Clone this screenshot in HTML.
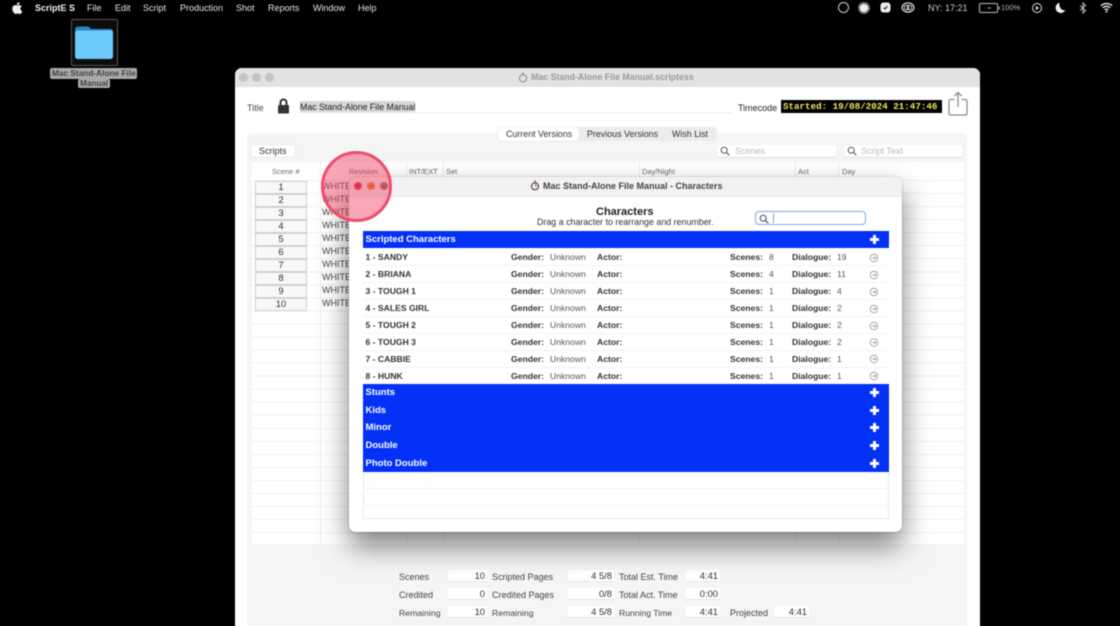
<!DOCTYPE html>
<html><head><meta charset="utf-8"><style>
html,body{margin:0;padding:0;background:#000;width:1120px;height:626px;overflow:hidden}
body{font-family:"Liberation Sans",sans-serif;font-size:9px;color:#333;position:relative;filter:blur(.4px)}
div,span,svg{position:absolute;white-space:nowrap}
.m{color:#e6e6e6;font-size:9px;top:2px;line-height:12px}
.h{color:#666;font-size:7.5px;top:167px;line-height:9px}
.b{left:255px;width:50px;height:10.5px;border:1px solid #cfcfcf;background:#f8f8f8;text-align:center;font-size:9.5px;line-height:11.5px;color:#333}
.w{left:322px;font-size:9px;line-height:11px;color:#444}
.n,.l,.v,.c{font-size:8.6px;line-height:12px}
.n,.l{font-weight:bold;color:#333}.v{color:#555}
.g{left:511px}.u{left:550px}.a{left:597px}.s{left:730px}.t{left:769px}.d{left:792px}.e{left:837px}
.blue{left:362.5px;width:526.5px;background:#0331f6}
.bt{left:365.5px;color:#fff;font-weight:bold;font-size:9.5px;line-height:12px}
.p1{width:9px;height:2.6px;background:#fff;left:870px}.p2{width:2.6px;height:9px;background:#fff;left:873.2px}
.f{color:#444;font-size:9px;line-height:12px}
.x{background:#fff;height:11px;border-bottom:1px solid #e4e4e4;text-align:right;font-size:9.4px;line-height:12px;color:#333;box-sizing:content-box;padding-right:2px}
.sep{left:362.5px;width:526.5px;height:1px;background:#f3f3f3}
.cl{top:162px;width:1px;height:382px;background:#ececec}
</style></head><body>
<svg style="left:12px;top:2px" width="11" height="12" viewBox="0 0 22 24"><path fill="#eee" d="M15 0c.2 2-.6 3.500-1.500 4.700-1 1.200-2.500 2-4 1.900C9.300 4.700 10.100 3 11 2c1-1.100 2.700-1.900 4-2zM19.800 8.300c-2 1.200-3 2.900-3 5 0 2.400 1.400 4.300 3.900 5.300-.6 1.700-1.300 3-2.300 4.100-1 1.200-2 1.300-3 1.300-1.500 0-2.200-.9-4-.9s-2.600.9-4 .9c-1.200 0-2.300-.7-3.400-2.200C1.400 19 .5 16 .5 13.500c0-4.400 2.800-7.200 6-7.200 1.600 0 3 1 4 1 1 0 2.600-1.100 4.400-1.100 2 0 3.700 .7 4.900 2.100z"/></svg>
<span class="m" style="left:35px;font-weight:bold;color:#f2f2f2">ScriptE S</span>
<span class="m" style="left:87px">File</span>
<span class="m" style="left:115px">Edit</span>
<span class="m" style="left:143px">Script</span>
<span class="m" style="left:180px">Production</span>
<span class="m" style="left:236px">Shot</span>
<span class="m" style="left:268px">Reports</span>
<span class="m" style="left:313px">Window</span>
<span class="m" style="left:358px">Help</span>

<svg style="left:837px;top:1px" width="13" height="13"><circle cx="6.500" cy="6.500" r="5" fill="none" stroke="#ccc" stroke-width="1"/></svg>
<svg style="left:858px;top:2px" width="12" height="12" viewBox="0 0 12 12"><circle cx="6" cy="6" r="3.800" fill="#eee" stroke="#eee" stroke-width="1"/><circle cx="6" cy="6" r="5.200" fill="none" stroke="#ddd" stroke-width="1.500" stroke-dasharray="1.300 1"/></svg>
<svg style="left:880px;top:2px" width="11" height="11" viewBox="0 0 11 11"><rect x=".5" y=".5" width="10" height="10" rx="3" fill="#eee"/><path d="M3.500 5.500l1.500 1.500 2.500-3" fill="none" stroke="#222" stroke-width="1"/></svg>
<svg style="left:901px;top:2px" width="14" height="11" viewBox="0 0 14 11"><ellipse cx="7" cy="5.500" rx="6" ry="4.600" fill="none" stroke="#ddd" stroke-width="1.200"/><circle cx="5.500" cy="5.500" r="2.300" fill="none" stroke="#ddd" stroke-width="1"/><circle cx="8.500" cy="5.500" r="2.300" fill="none" stroke="#ddd" stroke-width="1"/></svg>
<span class="m" style="left:928px;color:#ccc">NY: 17:21</span>
<svg style="left:979px;top:3px" width="22" height="10"><rect x=".5" y=".5" width="18" height="9" rx="1.500" fill="none" stroke="#bbb"/><rect x="9" y="4.500" width="2.500" height="1" fill="#ccc"/><rect x="19.500" y="3.500" width="1.200" height="3" fill="#aaa"/></svg>
<span style="left:1001px;top:3px;font-size:7.5px;line-height:10px;color:#bbb">100%</span>
<svg style="left:1031px;top:2px" width="12" height="12"><circle cx="6" cy="6" r="4.500" fill="none" stroke="#ddd"/><path d="M4.800 3.800L8 6l-3.200 2.200z" fill="#ddd"/></svg>
<svg style="left:1055px;top:2px" width="11" height="12" viewBox="0 0 11 12"><path d="M4.500 .8C2 1.500.6 3.500.6 5.800c0 3 2.400 5.200 5.200 5.200 2 0 3.700-1 4.500-2.700-3.500.6-6.600-2.800-5.800-7.500z" fill="#eee"/></svg>
<svg style="left:1079px;top:2px" width="8" height="12" viewBox="0 0 8 12"><path d="M1 3.500l5.500 5L4 11V1l2.500 2.500L1 8.500" fill="none" stroke="#bbb" stroke-width="1"/></svg>
<svg style="left:1100px;top:2px" width="13" height="11" viewBox="0 0 13 11"><path d="M.8 3.800C4 .8 9 .8 12.200 3.800M2.700 5.800c2.200-2 5.400-2 7.600 0M4.600 7.800c1.100-1 2.700-1 3.800 0" fill="none" stroke="#eee" stroke-width="1.300"/><circle cx="6.500" cy="9.500" r="1" fill="#eee"/></svg>

<div style="left:70.500px;top:19px;width:45px;height:45px;border:1px solid #555;border-radius:2px;background:#0c0c0c"></div>
<svg style="left:75px;top:26px" width="38" height="33" viewBox="0 0 38 33"><path d="M0 4Q0 .5 3 .5h9q2 0 3 1.500l1 1h19q3 0 3 3V10H0z" fill="#2a86c8"/><rect x="0" y="4.500" width="38" height="28.500" rx="2.500" fill="#6ccbfb"/></svg>
<div style="left:50px;top:68px;width:87px;height:11px;background:#a9a9a9;border-radius:2px"></div>
<div style="left:78px;top:79px;width:32px;height:9px;background:#a9a9a9;border-radius:2px"></div>
<span style="left:52px;top:68px;font-size:8.200px;font-weight:bold;color:#444;line-height:11px;letter-spacing:.05px">Mac Stand-Alone File</span>
<span style="left:80px;top:78px;font-size:8.200px;font-weight:bold;color:#444;line-height:11px">Manual</span>

<!-- main window -->
<div style="left:235px;top:68px;width:745px;height:570px;background:#fff;border-radius:7px 7px 0 0;overflow:hidden">
<div style="left:0;top:0;width:745px;height:19px;background:#e2e2e2"></div>
<div style="left:4px;top:5px;width:8.500px;height:8.500px;border-radius:50%;background:#c4c4c4"></div>
<div style="left:17px;top:5px;width:8.500px;height:8.500px;border-radius:50%;background:#c4c4c4"></div>
<div style="left:30px;top:5px;width:8.500px;height:8.500px;border-radius:50%;background:#c4c4c4"></div>
</div>
<svg style="left:518px;top:72px" width="10" height="11" viewBox="0 0 10 11"><circle cx="5" cy="6.300" r="3.600" fill="none" stroke="#8a8a8a" stroke-width="1"/><path d="M4 1.200h2M5 1v2" stroke="#8a8a8a" stroke-width="1"/></svg>
<span style="left:531px;top:71px;font-size:8.800px;font-weight:bold;color:#9a9a9a;line-height:12px">Mac Stand-Alone File Manual.scriptess</span>

<span class="f" style="left:247px;top:102px">Title</span>
<svg style="left:277px;top:98px" width="13" height="16" viewBox="0 0 13 16"><path d="M3.500 7.500V4.500a3 3 0 016 0v3" fill="none" stroke="#333" stroke-width="2"/><rect x="1" y="7" width="11" height="8.500" rx="1" fill="#333"/></svg>
<div style="left:298px;top:101px;width:434px;height:11px;background:#fff;border-bottom:1px solid #ececec"></div>
<div style="left:300px;top:101px;width:115px;height:11px;background:#d8d8d8"></div>
<span class="f" style="left:300px;top:101px;color:#222;font-size:8.800px">Mac Stand-Alone File Manual</span>
<span class="f" style="left:738px;top:102px;color:#222">Timecode</span>
<div style="left:781px;top:100px;width:161px;height:13px;background:#000"></div>
<span style="left:783px;top:101px;font-family:'Liberation Mono',monospace;font-weight:bold;font-size:9.200px;line-height:12px;color:#f4e85a">Started: 19/08/2024 21:47:46</span>
<svg style="left:948px;top:91px" width="21" height="25" viewBox="0 0 21 25"><path d="M6.500 8.500H2.500a1.500 1.500 0 00-1.500 1.500v12.500a1.500 1.500 0 001.500 1.500h15a1.500 1.500 0 001.500-1.500V10a1.500 1.500 0 00-1.500-1.500h-4M10 16V1.500M6.500 5L10 1.500 13.500 5" fill="none" stroke="#8a8a8a" stroke-width="1.300"/></svg>

<div style="left:247px;top:133px;width:720px;height:493px;background:#f5f5f5;border-radius:5px 5px 0 0"></div>
<div style="left:498px;top:127px;width:219px;height:14px;background:#ececec;border-radius:4px"></div>
<div style="left:498px;top:127px;width:81px;height:14px;background:#fff;border-radius:4px;box-shadow:0 0 1px #aaa"></div>
<span class="f" style="left:506px;top:128px;color:#333;font-size:8.900px">Current Versions</span>
<span class="f" style="left:587px;top:128px;color:#333;font-size:8.900px">Previous Versions</span>
<span class="f" style="left:672px;top:128px;color:#333;font-size:8.900px">Wish List</span>

<div style="left:251px;top:145px;width:44px;height:12px;background:#fff;border-radius:3px;box-shadow:0 0 1px #aaa"></div>
<span class="f" style="left:259px;top:145px;color:#333">Scripts</span>
<div style="left:717px;top:145px;width:120px;height:12px;background:#fff;border-radius:3px;box-shadow:0 .5px 1px #ccc"></div>
<div style="left:844px;top:145px;width:119px;height:12px;background:#fff;border-radius:3px;box-shadow:0 .5px 1px #ccc"></div>
<svg style="left:720px;top:146px" width="10" height="10"><circle cx="4.200" cy="4.200" r="3" fill="none" stroke="#555"/><path d="M6.500 6.500l2.800 2.800" stroke="#555" stroke-width="1.100"/></svg>
<svg style="left:847px;top:146px" width="10" height="10"><circle cx="4.200" cy="4.200" r="3" fill="none" stroke="#555"/><path d="M6.500 6.500l2.800 2.800" stroke="#555" stroke-width="1.100"/></svg>
<span class="f" style="left:735px;top:145px;color:#bbb">Scenes</span>
<span class="f" style="left:861px;top:145px;color:#bbb">Script Text</span>

<!-- table -->
<div style="left:252px;top:162px;width:712px;height:382px;background:#fff"></div>
<div style="left:252px;top:180px;width:712px;height:1px;background:#f0f0f0"></div>
<div style="left:252px;top:181px;width:712px;height:363px;background:repeating-linear-gradient(#fff 0,#fff 12.040px,#f0f0f0 12.040px,#f0f0f0 13.040px)"></div>
<div class="cl" style="left:320px"></div>
<div class="cl" style="left:406px"></div>
<div class="cl" style="left:443px"></div>
<div class="cl" style="left:639px"></div>
<div class="cl" style="left:795px"></div>
<div class="cl" style="left:838px"></div>
<span class="h" style="left:272px">Scene #</span>
<span class="h" style="left:349px">Revision</span>
<span class="h" style="left:409px">INT/EXT</span>
<span class="h" style="left:446px">Set</span>
<span class="h" style="left:642px">Day/Night</span>
<span class="h" style="left:798px">Act</span>
<span class="h" style="left:842px">Day</span>
<div class="b" style="top:181px">1</div><span class="w" style="top:181px">WHITE</span>
<div class="b" style="top:194px">2</div><span class="w" style="top:194px">WHITE</span>
<div class="b" style="top:207px">3</div><span class="w" style="top:207px">WHITE</span>
<div class="b" style="top:220px">4</div><span class="w" style="top:220px">WHITE</span>
<div class="b" style="top:233px">5</div><span class="w" style="top:233px">WHITE</span>
<div class="b" style="top:246px">6</div><span class="w" style="top:246px">WHITE</span>
<div class="b" style="top:259px">7</div><span class="w" style="top:259px">WHITE</span>
<div class="b" style="top:272px">8</div><span class="w" style="top:272px">WHITE</span>
<div class="b" style="top:285.300px">9</div><span class="w" style="top:285px">WHITE</span>
<div class="b" style="top:298.400px">10</div><span class="w" style="top:298px">WHITE</span>

<!-- footer -->
<span class="f" style="left:399px;top:571px">Scenes</span>
<span class="f" style="left:399px;top:589px">Credited</span>
<span class="f" style="left:399px;top:607px;font-size:8.700px">Remaining</span>
<div class="x" style="left:448px;top:570px;width:37px">10</div>
<div class="x" style="left:448px;top:588px;width:37px">0</div>
<div class="x" style="left:448px;top:606px;width:37px">10</div>
<span class="f" style="left:492px;top:571px">Scripted Pages</span>
<span class="f" style="left:492px;top:589px">Credited Pages</span>
<span class="f" style="left:492px;top:607px;font-size:8.700px">Remaining</span>
<div class="x" style="left:568px;top:570px;width:44px">4 5/8</div>
<div class="x" style="left:568px;top:588px;width:44px">0/8</div>
<div class="x" style="left:568px;top:606px;width:44px">4 5/8</div>
<span class="f" style="left:619px;top:570.500px">Total Est. Time</span>
<span class="f" style="left:619px;top:589px">Total Act. Time</span>
<span class="f" style="left:619px;top:607px;font-size:8.600px">Running Time</span>
<div class="x" style="left:686px;top:570px;width:32px">4:41</div>
<div class="x" style="left:686px;top:588px;width:32px">0:00</div>
<div class="x" style="left:686px;top:606px;width:32px">4:41</div>
<span class="f" style="left:730px;top:607px">Projected</span>
<div class="x" style="left:775px;top:606px;width:32px">4:41</div>

<!-- dialog -->
<div style="left:349px;top:177px;width:553px;height:354.500px;background:#fff;border-radius:7px;box-shadow:0 14px 28px rgba(0,0,0,.5),0 0 2px rgba(0,0,0,.25);overflow:hidden">
<div style="left:0;top:0;width:553px;height:18.500px;background:#f2f2f2;border-bottom:1px solid #e6e6e6"></div>
</div>
<svg style="left:530px;top:180px" width="10" height="11" viewBox="0 0 10 11"><circle cx="5" cy="6.300" r="3.500" fill="none" stroke="#333" stroke-width="1"/><path d="M5 6.300V3.200l2.500 3.500z" fill="#e2552c"/><path d="M4 1.200h2" stroke="#333"/></svg>
<span style="left:543px;top:180px;font-size:9px;font-weight:bold;color:#444;line-height:12px">Mac Stand-Alone File Manual - Characters</span>
<span style="left:596px;top:206px;font-size:11px;font-weight:bold;color:#222;line-height:13px">Characters</span>
<span style="left:537px;top:217px;font-size:8.900px;color:#333;line-height:11px">Drag a character to rearrange and renumber.</span>
<div style="left:755px;top:211px;width:109px;height:12px;background:#fff;border:1.500px solid #7aa9e6;border-radius:4px"></div>
<svg style="left:759px;top:214px" width="10" height="10"><circle cx="4.200" cy="4.200" r="3" fill="none" stroke="#444"/><path d="M6.500 6.500l2.800 2.800" stroke="#444" stroke-width="1.100"/></svg>
<div style="left:773px;top:213px;width:1px;height:10px;background:#7aa0d8"></div>

<div style="left:362.500px;top:472px;width:526.500px;height:46.500px;background:#fff;border:solid #e8e8e8;border-width:0 1px 1px;box-sizing:border-box"></div>
<div class="blue" style="top:231px;height:17px"></div>
<span class="bt" style="top:234px">Scripted Characters</span>
<div class="p1" style="top:238px"></div><div class="p2" style="top:235px"></div>

<div class="sep" style="top:265px"></div><div class="sep" style="top:282px"></div><div class="sep" style="top:299px"></div><div class="sep" style="top:316px"></div><div class="sep" style="top:333px"></div><div class="sep" style="top:350px"></div><div class="sep" style="top:367px"></div><div class="sep" style="top:488px"></div><div class="sep" style="top:505px"></div>

<span class="n" style="left:365.500px;top:251px">1 - SANDY</span><span class="l g" style="top:251px">Gender:</span><span class="v u" style="top:251px">Unknown</span><span class="l a" style="top:251px">Actor:</span><span class="l s" style="top:251px">Scenes:</span><span class="v t" style="top:251px">8</span><span class="l d" style="top:251px">Dialogue:</span><span class="v e" style="top:251px">19</span>
<span class="n" style="left:365.500px;top:268px">2 - BRIANA</span><span class="l g" style="top:268px">Gender:</span><span class="v u" style="top:268px">Unknown</span><span class="l a" style="top:268px">Actor:</span><span class="l s" style="top:268px">Scenes:</span><span class="v t" style="top:268px">4</span><span class="l d" style="top:268px">Dialogue:</span><span class="v e" style="top:268px">11</span>
<span class="n" style="left:365.500px;top:285px">3 - TOUGH 1</span><span class="l g" style="top:285px">Gender:</span><span class="v u" style="top:285px">Unknown</span><span class="l a" style="top:285px">Actor:</span><span class="l s" style="top:285px">Scenes:</span><span class="v t" style="top:285px">1</span><span class="l d" style="top:285px">Dialogue:</span><span class="v e" style="top:285px">4</span>
<span class="n" style="left:365.500px;top:302px">4 - SALES GIRL</span><span class="l g" style="top:302px">Gender:</span><span class="v u" style="top:302px">Unknown</span><span class="l a" style="top:302px">Actor:</span><span class="l s" style="top:302px">Scenes:</span><span class="v t" style="top:302px">1</span><span class="l d" style="top:302px">Dialogue:</span><span class="v e" style="top:302px">2</span>
<span class="n" style="left:365.500px;top:319px">5 - TOUGH 2</span><span class="l g" style="top:319px">Gender:</span><span class="v u" style="top:319px">Unknown</span><span class="l a" style="top:319px">Actor:</span><span class="l s" style="top:319px">Scenes:</span><span class="v t" style="top:319px">1</span><span class="l d" style="top:319px">Dialogue:</span><span class="v e" style="top:319px">2</span>
<span class="n" style="left:365.500px;top:336px">6 - TOUGH 3</span><span class="l g" style="top:336px">Gender:</span><span class="v u" style="top:336px">Unknown</span><span class="l a" style="top:336px">Actor:</span><span class="l s" style="top:336px">Scenes:</span><span class="v t" style="top:336px">1</span><span class="l d" style="top:336px">Dialogue:</span><span class="v e" style="top:336px">2</span>
<span class="n" style="left:365.500px;top:352.500px">7 - CABBIE</span><span class="l g" style="top:352.500px">Gender:</span><span class="v u" style="top:352.500px">Unknown</span><span class="l a" style="top:352.500px">Actor:</span><span class="l s" style="top:352.500px">Scenes:</span><span class="v t" style="top:352.500px">1</span><span class="l d" style="top:352.500px">Dialogue:</span><span class="v e" style="top:352.500px">1</span>
<span class="n" style="left:365.500px;top:369.500px">8 - HUNK</span><span class="l g" style="top:369.500px">Gender:</span><span class="v u" style="top:369.500px">Unknown</span><span class="l a" style="top:369.500px">Actor:</span><span class="l s" style="top:369.500px">Scenes:</span><span class="v t" style="top:369.500px">1</span><span class="l d" style="top:369.500px">Dialogue:</span><span class="v e" style="top:369.500px">1</span>

<svg style="left:869px;top:253px" width="10" height="130" viewBox="0 0 10 130" fill="none" stroke="#999" stroke-width=".8"><circle cx="5" cy="5" r="3.800"/><path d="M3 5h4M5.500 3.500L7 5 5.500 6.500"/><circle cx="5" cy="22" r="3.800"/><path d="M3 22h4M5.500 20.500L7 22 5.500 23.500"/><circle cx="5" cy="39" r="3.800"/><path d="M3 39h4M5.500 37.500L7 39 5.500 40.500"/><circle cx="5" cy="56" r="3.800"/><path d="M3 56h4M5.500 54.500L7 56 5.500 57.500"/><circle cx="5" cy="73" r="3.800"/><path d="M3 73h4M5.500 71.500L7 73 5.500 74.500"/><circle cx="5" cy="89.500" r="3.800"/><path d="M3 89.500h4M5.500 88L7 89.500 5.500 91"/><circle cx="5" cy="106" r="3.800"/><path d="M3 106h4M5.500 104.500L7 106 5.500 107.500"/><circle cx="5" cy="123" r="3.800"/><path d="M3 123h4M5.500 121.500L7 123 5.500 124.500"/></svg>

<div class="blue" style="top:384px;height:88px"></div>
<span class="bt" style="top:387px">Stunts</span><div class="p1" style="top:391px"></div><div class="p2" style="top:388px"></div>
<span class="bt" style="top:405px">Kids</span><div class="p1" style="top:409px"></div><div class="p2" style="top:406px"></div>
<span class="bt" style="top:422px">Minor</span><div class="p1" style="top:426px"></div><div class="p2" style="top:423px"></div>
<span class="bt" style="top:440px">Double</span><div class="p1" style="top:444px"></div><div class="p2" style="top:441px"></div>
<span class="bt" style="top:458px">Photo Double</span><div class="p1" style="top:462px"></div><div class="p2" style="top:459px"></div>

<!-- dialog traffic lights -->
<div style="left:354px;top:182px;width:8px;height:8px;border-radius:50%;background:#e8384f"></div>
<div style="left:367px;top:182px;width:8px;height:8px;border-radius:50%;background:#f0803c"></div>
<div style="left:380px;top:182px;width:8px;height:8px;border-radius:50%;background:#8f8050"></div>
<svg style="left:354px;top:182px" width="34" height="8" fill="none" stroke-width=".8"><path d="M2.500 2.500l3 3M5.500 2.500l-3 3" stroke="#8a1020"/><path d="M15 4h4" stroke="#9a4a10"/><path d="M28.500 4l1.500 1.500 2-3" stroke="#4d4420"/></svg>

<!-- highlight -->
<div style="left:320.500px;top:150.500px;width:71px;height:71px;box-sizing:border-box;border-radius:50%;background:rgba(243,66,98,.47);border:3px solid #ee4d6e"></div>
</body></html>
